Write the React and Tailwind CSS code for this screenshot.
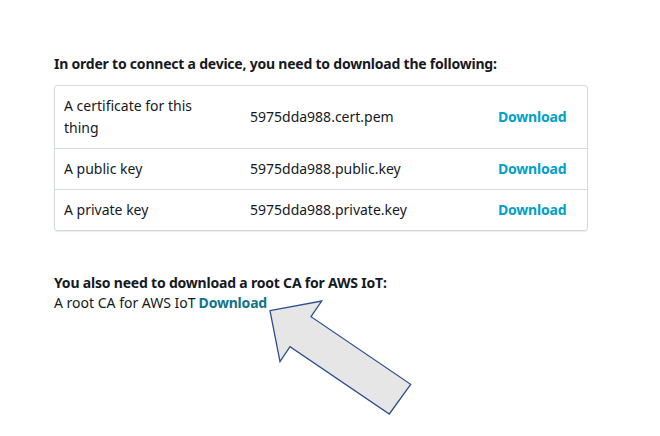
export default function App() {
  const files = [
    { label: "A certificate for this thing", name: "5975dda988.cert.pem" },
    { label: "A public key", name: "5975dda988.public.key" },
    { label: "A private key", name: "5975dda988.private.key" },
  ]

  return (
    <div
      className="relative w-[660px] h-[436px] bg-white text-[#16191f] text-[14px]"
      style={{ fontFamily: '"Noto Sans", "Open Sans", Arial, sans-serif' }}
    >
      <div className="pl-[54px] pt-[53px] w-[588px]">
        <h2 className="font-bold leading-[22px] tracking-[-0.22px]">
          In order to connect a device, you need to download the following:
        </h2>

        <div className="mt-[10px] border border-[#d5dbdb] rounded-[3px] shadow-[0_1px_1px_rgba(0,0,0,0.08)]">
          {files.map((f, i) => (
            <div
              key={f.name}
              className={`grid grid-cols-[195px_248px_1fr] items-center leading-[22px] py-[9px] ${
                i > 0 ? "border-t border-[#d5dbdb]" : ""
              }`}
            >
              <div className="pl-[9px] pr-[40px]">{f.label}</div>
              <div>{f.name}</div>
              <div>
                <a href="#" className="font-bold text-[#00a1c9] tracking-[-0.2px]">
                  Download
                </a>
              </div>
            </div>
          ))}
        </div>

        <h3 className="mt-[42px] font-bold leading-[20px] tracking-[-0.2px]">
          You also need to download a root CA for AWS IoT:
        </h3>
        <p className="leading-[20px]">
          A root CA for AWS IoT
          <a href="#" className="font-bold text-[#0f7489] ml-[3px] tracking-[-0.2px]">
            Download
          </a>
        </p>
      </div>

      <svg className="absolute left-0 top-0" width="660" height="436" viewBox="0 0 660 436">
        <polygon
          points="270,310.7 321.7,301 311,316.7 410.7,384.3 389.3,414 290,346.7 280,361.7"
          fill="#e6e6e6"
          stroke="#2f4f8f"
          strokeWidth="1.3"
          strokeLinejoin="miter"
        />
      </svg>
    </div>
  )
}
